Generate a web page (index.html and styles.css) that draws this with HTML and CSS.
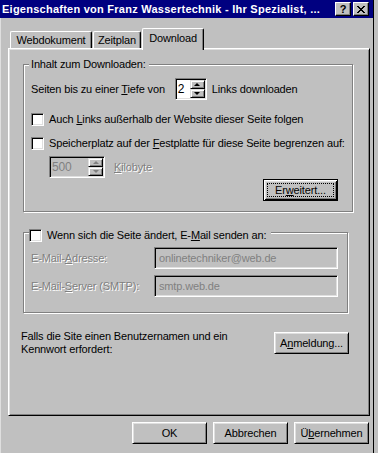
FILE: index.html
```html
<!doctype html>
<html lang="de">

<head>
    <meta charset="UTF-8" />
    <title>Eigenschaften von Franz Wassertechnik</title>
    <link rel="stylesheet" href="styles.css">
</head>

<body>
    <div class="window">
        <div class="titlebar">
            <span class="titlebar__text">Eigenschaften von Franz Wassertechnik - Ihr Spezialist, ...</span>
            <span class="caption-btn">?</span>
            <span class="caption-btn">
                <svg width="8" height="7" viewBox="0 0 8 7" shape-rendering="crispEdges">
                    <path d="M0 0h2v1h-2zM6 0h2v1h-2zM1 1h2v1h-2zM5 1h2v1h-2zM2 2h4v1h-4zM3 3h2v1h-2zM2 4h4v1h-4zM1 5h2v1h-2zM5 5h2v1h-2zM0 6h2v1h-2zM6 6h2v1h-2z" fill="#000" />
                </svg>
            </span>
        </div>
        <div class="client">
            <div class="tabs">
                <span class="tab tab--web">Webdokument</span>
                <span class="tab tab--plan">Zeitplan</span>
                <span class="tab tab--selected">Download</span>
            </div>
            <div class="panel">
                <div class="group group--content">
                    <div class="group__title">Inhalt zum Downloaden:</div>
                    <div class="row">
                        <span>Seiten bis zu einer <u>T</u>iefe von</span>
                        <span class="spin spin--depth">
                            <span class="spin__value">2</span>
                            <span class="spin__buttons">
                                <span class="spin__btn spin__btn--up"></span>
                                <span class="spin__btn spin__btn--down"></span>
                            </span>
                        </span>
                        <span>Links downloaden</span>
                    </div>
                    <label class="check check--first">
                        <span class="check__box"></span>
                        <span>Auch <u>L</u>inks außerhalb der Website dieser Seite folgen</span>
                    </label>
                    <label class="check check--second">
                        <span class="check__box"></span>
                        <span>Speicherplatz auf der <u>F</u>estplatte für diese Seite begrenzen auf:</span>
                    </label>
                    <div class="row row--limit">
                        <span class="spin spin--limit spin--disabled">
                            <span class="spin__value">500</span>
                            <span class="spin__buttons">
                                <span class="spin__btn spin__btn--up"></span>
                                <span class="spin__btn spin__btn--down"></span>
                            </span>
                        </span>
                        <span class="disabled"><u>K</u>ilobyte</span>
                    </div>
                    <div class="row row--actions">
                        <button class="btn btn--default">Er<u>w</u>eitert...</button>
                    </div>
                </div>

                <div class="group group--mail">
                    <label class="check group__title group__title--check">
                        <span class="check__box"></span>
                        <span>Wenn sich die Seite ändert, E-<u>M</u>ail senden an:</span>
                    </label>
                    <div class="mail-grid">
                        <span class="disabled">E-Mail-<u>A</u>dresse:</span>
                        <span class="field">onlinetechniker@web.de</span>
                        <span class="disabled">E-Mail-<u>S</u>erver (SMTP):</span>
                        <span class="field">smtp.web.de</span>
                    </div>
                </div>

                <div class="login">
                    <p class="login__text">Falls die Site einen Benutzernamen und ein<br>Kennwort erfordert:</p>
                    <button class="btn">A<u>n</u>meldung...</button>
                </div>
            </div>
            <div class="actions">
                <button class="btn">OK</button>
                <button class="btn">Abbrechen</button>
                <button class="btn">Ü<u>b</u>ernehmen</button>
            </div>
        </div>
    </div>
</body>

</html>
```

FILE: styles.css
```css
:root {
    --face: #c0c0c0;
    --light: #dfdfdf;
    --shadow: #808080;
    --dark: #000;
    --title: #000080;
}

* {
    margin: 0;
    padding: 0;
    box-sizing: border-box;
}

body {
    background: var(--face);
    font-family: 'Liberation Sans', Arial, sans-serif;
    font-size: 11px;
    line-height: 13px;
    letter-spacing: -0.15px;
    color: #000;
}

u {
    text-decoration-thickness: 1px;
    text-underline-offset: 1px;
}

.window {
    width: 374px;
    height: 453px;
    border-right: 1px solid var(--dark);
}

.titlebar {
    display: flex;
    align-items: center;
    gap: 2px;
    height: 18px;
    padding: 0 4px 0 2px;
    background: var(--title);
}

.titlebar__text {
    flex: 1;
    color: #fff;
    font-weight: bold;
    letter-spacing: 0.25px;
    white-space: nowrap;
    overflow: hidden;
}

.caption-btn {
    display: flex;
    align-items: center;
    justify-content: center;
    width: 16px;
    height: 14px;
    background: var(--face);
    border: 1px solid;
    border-color: #fff var(--dark) var(--dark) #fff;
    box-shadow: inset -1px -1px 0 var(--shadow);
    font-weight: bold;
    font-size: 11px;
}

.client {
    height: 435px;
    padding: 10px 0 0 7px;
    border-left: 1px solid var(--light);
}

/* tabs */

.tabs {
    display: flex;
    align-items: flex-end;
    height: 20px;
    padding-left: 2px;
}

.tab {
    height: 17px;
    padding-top: 2px;
    margin-right: 1px;
    text-align: center;
    border: 1px solid #fff;
    border-bottom: 0;
    border-right-color: var(--dark);
    border-radius: 2px 2px 0 0;
    box-shadow: inset -1px 0 0 var(--shadow);
}

.tab--web {
    width: 82px;
}

.tab--plan {
    width: 48px;
}

.tab--selected {
    position: relative;
    z-index: 1;
    width: 62px;
    height: 22px;
    margin-bottom: -2px;
    padding-top: 3px;
    background: var(--face);
}

/* panel */

.panel {
    width: 362px;
    height: 368px;
    padding: 15px 0 0 14px;
    border: 1px solid;
    border-color: #fff var(--dark) var(--dark) #fff;
    box-shadow: inset 1px 1px 0 var(--light), inset -1px -1px 0 var(--shadow);
}

.group {
    border: 1px solid var(--shadow);
    box-shadow: 1px 1px 0 #fff, inset 1px 1px 0 #fff;
}

.group--content {
    width: 330px;
    padding: 0 14px 10px 7px;
}

.group--mail {
    width: 325px;
    margin-top: 20px;
    padding-bottom: 15px;
}

.group__title {
    display: table;
    margin: -7px 0 0 -2px;
    padding: 0 3px 0 2px;
    background: var(--face);
}

.group__title--check {
    display: flex;
    margin: -4px 0 0 5px;
    padding: 0 5px 0 0;
    width: max-content;
}

.row {
    display: flex;
    align-items: center;
    margin-top: 7px;
}

.row--limit {
    margin-top: 6px;
    padding-left: 18px;
}

.row--actions {
    justify-content: flex-end;
    margin-top: 1px;
}

.disabled {
    color: var(--shadow);
    text-shadow: 1px 1px 0 #fff;
}

/* spin box */

.spin {
    display: flex;
    height: 22px;
    padding: 1px;
    border: 1px solid;
    border-color: var(--shadow) #fff #fff var(--shadow);
    box-shadow: inset 1px 1px 0 var(--dark), inset -1px -1px 0 var(--light);
    background: #fff;
}

.spin--depth {
    width: 32px;
    margin: 0 5px 0 10px;
}

.spin--limit {
    width: 56px;
    margin-right: 9px;
}

.spin__value {
    flex: 1;
    padding: 1px 0 0 1px;
    line-height: 16px;
    font-size: 12px;
}

.spin--disabled {
    background: var(--face);
}

.spin--disabled .spin__value {
    color: var(--shadow);
}

.spin__buttons {
    display: flex;
    flex-direction: column;
    width: 15px;
}

.spin__btn {
    flex: 1;
    display: flex;
    align-items: center;
    justify-content: center;
    background: var(--face);
    border: 1px solid;
    border-color: var(--light) var(--dark) var(--dark) var(--light);
    box-shadow: inset 1px 1px 0 #fff, inset -1px -1px 0 var(--shadow);
}

.spin__btn::after {
    content: '';
    border-left: 3px solid transparent;
    border-right: 3px solid transparent;
}

.spin__btn--up::after {
    border-bottom: 3px solid var(--dark);
}

.spin__btn--down::after {
    border-top: 3px solid var(--dark);
}

.spin--disabled .spin__btn--up::after {
    border-bottom-color: var(--shadow);
}

.spin--disabled .spin__btn--down::after {
    border-top-color: var(--shadow);
}

/* checkbox */

.check {
    display: flex;
    align-items: center;
    white-space: nowrap;
}

.check--first {
    margin-top: 13px;
}

.check--second {
    margin-top: 11px;
}

.check__box {
    flex: none;
    width: 13px;
    height: 13px;
    margin-right: 5px;
    border: 1px solid;
    border-color: var(--shadow) #fff #fff var(--shadow);
    box-shadow: inset 1px 1px 0 var(--dark), inset -1px -1px 0 var(--light);
    background: #fff;
}

/* buttons */

.btn {
    position: relative;
    width: 75px;
    height: 22px;
    font: inherit;
    letter-spacing: inherit;
    color: #000;
    background: var(--face);
    border: 1px solid;
    border-color: #fff var(--dark) var(--dark) #fff;
    box-shadow: inset 1px 1px 0 var(--light), inset -1px -1px 0 var(--shadow);
}

.btn--default {
    border-color: var(--dark);
    box-shadow: inset 1px 1px 0 #fff, inset -1px -1px 0 var(--dark), inset 2px 2px 0 var(--light), inset -2px -2px 0 var(--shadow);
}

.btn--default::after {
    content: '';
    position: absolute;
    inset: 3px;
    border: 1px dotted var(--dark);
}

/* e-mail */

.mail-grid {
    display: grid;
    grid-template-columns: 123px 184px;
    align-items: center;
    row-gap: 6px;
    margin-top: 5px;
    padding-left: 7px;
}

.field {
    height: 22px;
    padding: 3px 0 0 4px;
    border: 1px solid;
    border-color: var(--shadow) #fff #fff var(--shadow);
    box-shadow: inset 1px 1px 0 var(--dark), inset -1px -1px 0 var(--light);
    color: var(--shadow);
    line-height: 14px;
}

/* login */

.login {
    display: flex;
    align-items: center;
    justify-content: space-between;
    width: 326px;
    margin-top: 17px;
}

.login__text {
    margin-left: -2px;
}

.actions {
    display: flex;
    justify-content: flex-end;
    gap: 6px;
    width: 362px;
    margin-top: 6px;
    padding-right: 1px;
}
```
